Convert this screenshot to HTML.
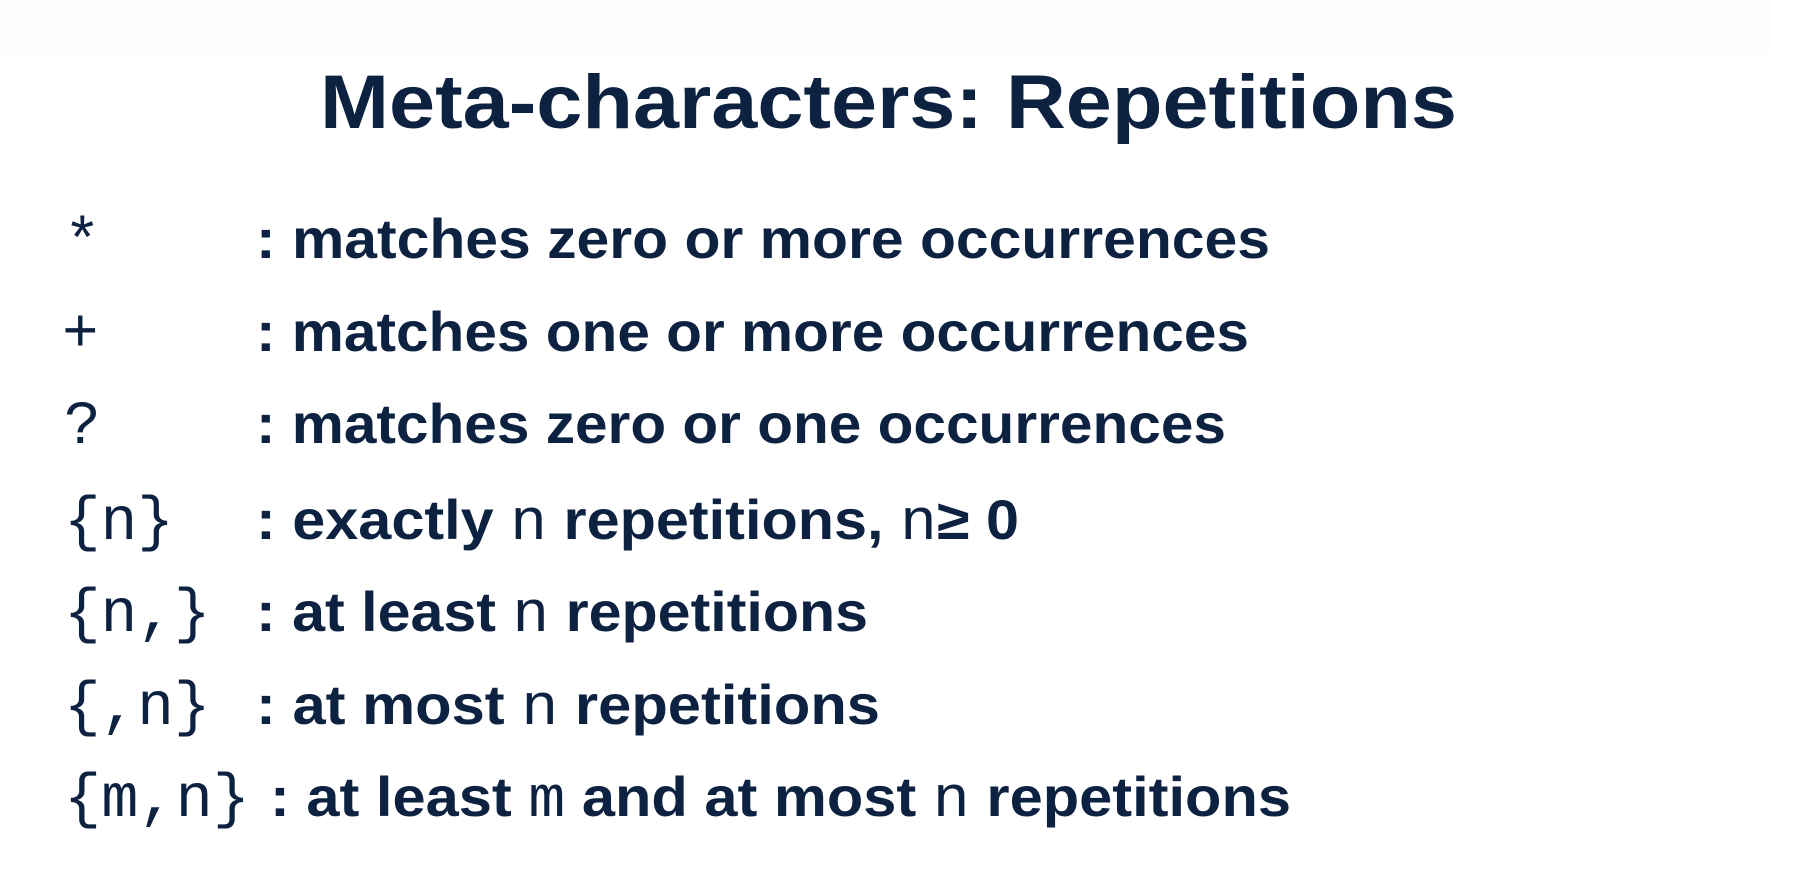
<!DOCTYPE html>
<html><head><meta charset="utf-8"><style>
html,body{margin:0;padding:0;background:#fff;}
svg{display:block}
.s{font-family:"Liberation Sans",sans-serif;font-weight:bold;fill:#0c2240}
.m{font-family:"Liberation Mono",monospace;font-weight:normal;fill:#0c2240}
</style></head><body>
<svg width="1818" height="875" viewBox="0 0 1818 875" xmlns="http://www.w3.org/2000/svg">
<rect width="1818" height="875" fill="#fff"/>
<rect x="0" y="0" width="1770" height="55" fill="#fcfcfd"/>
<text class="s" x="320" y="128" font-size="76" textLength="1137" lengthAdjust="spacingAndGlyphs">Meta-characters: Repetitions</text>

<text class="m" x="64" y="260" font-size="61">*</text>
<text class="s" x="256" y="258" font-size="56" textLength="1014" lengthAdjust="spacingAndGlyphs">: matches zero or more occurrences</text>

<text class="m" x="62" y="351" font-size="61">+</text>
<text class="s" x="256" y="351" font-size="56" textLength="993" lengthAdjust="spacingAndGlyphs">: matches one or more occurrences</text>

<text class="m" x="64" y="443" font-size="61">?</text>
<text class="s" x="256" y="443" font-size="56" textLength="970" lengthAdjust="spacingAndGlyphs">: matches zero or one occurrences</text>

<text class="m" x="64" y="539" font-size="61">{n}</text>
<text class="s" x="256" y="539" font-size="56" textLength="763" lengthAdjust="spacingAndGlyphs">: exactly <tspan class="m" font-size="58">n</tspan> repetitions, <tspan class="m" font-size="58">n</tspan>≥ 0</text>

<text class="m" x="64" y="631" font-size="61">{n,}</text>
<text class="s" x="256" y="631" font-size="56" textLength="612" lengthAdjust="spacingAndGlyphs">: at least <tspan class="m" font-size="58">n</tspan> repetitions</text>

<text class="m" x="64" y="724" font-size="61">{,n}</text>
<text class="s" x="256" y="724" font-size="56" textLength="624" lengthAdjust="spacingAndGlyphs">: at most <tspan class="m" font-size="58">n</tspan> repetitions</text>

<text class="m" x="64" y="816" font-size="61" textLength="186" lengthAdjust="spacingAndGlyphs">{m,n}</text>
<text class="s" x="270" y="816" font-size="56" textLength="1021" lengthAdjust="spacingAndGlyphs">: at least <tspan class="m" font-size="58">m</tspan> and at most <tspan class="m" font-size="58">n</tspan> repetitions</text>
</svg>
</body></html>
